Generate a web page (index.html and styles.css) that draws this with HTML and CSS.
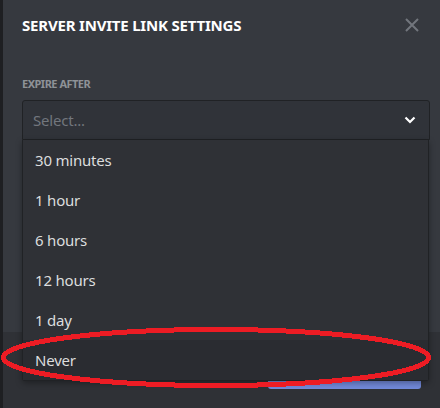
FILE: index.html
```html
<!DOCTYPE html>
<html>
<head>
<meta charset="utf-8">
<link rel="stylesheet" href="styles.css">
</head>
<body>
<div class="app">
  <div class="strip"></div>
  <div class="modal">
    <div class="header">
      <h1 class="title">SERVER INVITE LINK SETTINGS</h1>
      <svg class="close" width="16" height="16" viewBox="0 0 16 16"><path d="M2 2L14 14M14 2L2 14" stroke="#72767d" stroke-width="2" fill="none"/></svg>
    </div>
    <div class="body">
      <div class="label">EXPIRE AFTER</div>
      <div class="select-wrap">
        <div class="select">
          <span class="placeholder">Select...</span>
          <svg class="chevron" width="12" height="8" viewBox="0 0 12 8"><path d="M1.5 1.5L6 6L10.5 1.5" stroke="#ffffff" stroke-width="2.2" fill="none"/></svg>
        </div>
        <div class="menu">
          <div class="option">30 minutes</div>
          <div class="option">1 hour</div>
          <div class="option">6 hours</div>
          <div class="option">12 hours</div>
          <div class="option">1 day</div>
          <div class="option hover">Never</div>
        </div>
      </div>
    </div>
    <div class="footer">
      <div class="button"></div>
    </div>
  </div>
</div>
<svg class="ring" width="440" height="408" viewBox="0 0 440 408"><ellipse cx="216" cy="357.5" rx="212.5" ry="28" fill="none" stroke="#ed1c24" stroke-width="5" shape-rendering="crispEdges"/></svg>
</body>
</html>
```
FILE: styles.css
```css
html, body {
  margin: 0;
  padding: 0;
  background: #202225;
  width: 440px;
  height: 408px;
  overflow: hidden;
  font-family: "Noto Sans", "Open Sans", sans-serif;
}
.app {
  display: flex;
  width: 440px;
  height: 408px;
}
.strip {
  width: 3px;
  background: #1e1f22;
}
.modal {
  flex: 1;
  display: flex;
  flex-direction: column;
  background: #36393f;
}
.header {
  height: 50px;
  display: flex;
  align-items: center;
  justify-content: space-between;
  padding: 0 20px 0 19px;
}
.title {
  margin: 0;
  font-size: 15px;
  font-weight: 700;
  color: #ffffff;
  letter-spacing: -0.2px;
}
.close {
  display: block;
}
.body {
  flex: 1;
  padding: 26px 10px 0 19px;
}
.label {
  font-family: "Noto Sans", sans-serif;
  font-size: 11px;
  font-weight: 700;
  color: #8e9297;
  line-height: 16px;
  letter-spacing: -0.5px;
  margin-bottom: 8px;
}
.select-wrap {
  position: relative;
}
.select {
  height: 38px;
  border: 1px solid #202225;
  border-radius: 3px 3px 0 0;
  background: #303339;
  display: flex;
  align-items: center;
  justify-content: space-between;
  padding: 0 13px 0 10px;
}
.placeholder {
  color: #72767d;
  font-size: 15px;
  letter-spacing: -0.2px;
}
.chevron {
  display: block;
}
.menu {
  position: absolute;
  top: 40px;
  left: 0;
  right: 1px;
  background: #2f3136;
  border: 1px solid #202225;
  border-top: none;
  border-radius: 0 0 3px 3px;
  box-shadow: 0 2px 6px rgba(0,0,0,0.35);
  z-index: 2;
}
.option {
  height: 40px;
  display: flex;
  align-items: center;
  padding-left: 12px;
  color: #dcddde;
  font-size: 15px;
  letter-spacing: -0.2px;
}
.option.hover {
  background: #2a2c31;
}
.footer {
  height: 76px;
  background: #2f3136;
  display: flex;
  justify-content: flex-end;
  padding: 19px 19px 0 0;
  box-sizing: border-box;
}
.button {
  width: 153px;
  height: 38px;
  background: #7289da;
  border-radius: 3px;
}
.ring {
  position: absolute;
  left: 0;
  top: 0;
  z-index: 5;
  pointer-events: none;
}
```
